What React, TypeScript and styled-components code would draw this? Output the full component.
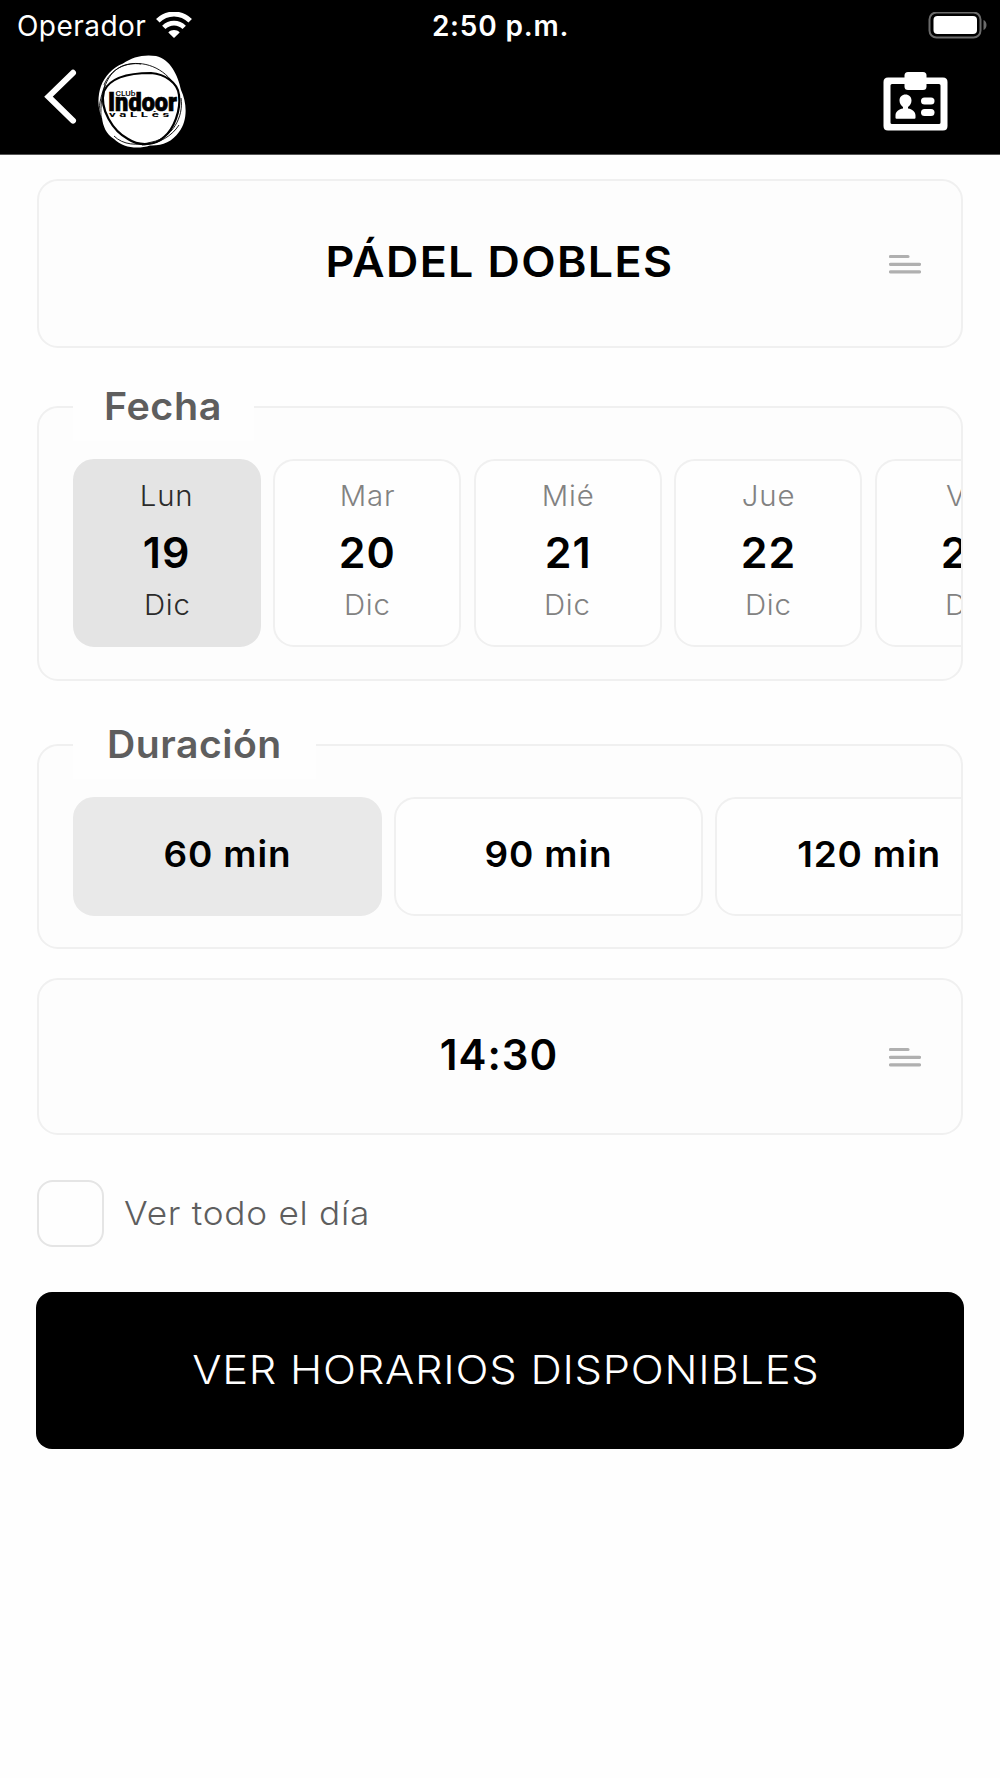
import React, { useState } from "react";
import styled, { createGlobalStyle } from "styled-components";

const Global = createGlobalStyle`
  *, *::before, *::after { box-sizing: border-box; }
  body { margin: 0; background: #fefefe; font-family: Inter, "Liberation Sans", sans-serif; }
  button { font: inherit; color: inherit; padding: 0; margin: 0; }
`;

const Screen = styled.div`
  width: 1000px;
  height: 1778px;
  overflow: hidden;
  display: flex;
  flex-direction: column;
  background: #fefefe;
  color: #000;
`;

const Top = styled.header`
  height: 155px;
  flex: none;
  background: #000;
  color: #fff;
  border-bottom: 1px solid #555;
`;

const StatusBar = styled.div`
  height: 51px;
  display: grid;
  grid-template-columns: 1fr auto 1fr;
  align-items: center;
  padding: 0 13px 0 17px;
`;

const Carrier = styled.div`
  display: flex;
  align-items: center;
  gap: 10px;
  font-size: 28px;
  line-height: 50px;
  letter-spacing: 0.45px;
`;

const Clock = styled.div`
  padding-right: 3px;
  font-size: 28px;
  font-weight: 560;
  line-height: 50px;
  letter-spacing: 0.8px;
`;

const BatterySlot = styled.div`
  display: flex;
  justify-content: flex-end;
`;

const NavBar = styled.nav`
  height: 103px;
  display: flex;
  align-items: flex-start;
  padding: 0 52px 0 44px;
`;

const IconButton = styled.button<{ $drop: number }>`
  display: flex;
  margin-top: ${(p) => p.$drop}px;
  border: 0;
  background: none;
`;

const LogoSlot = styled.div`
  display: flex;
  margin: 4px auto 0 20px;
`;

const Content = styled.main`
  display: flex;
  flex-direction: column;
  padding: 24px 37px 0;
`;

const Wide = styled.span<{ $scale: number; $origin?: string }>`
  display: inline-block;
  transform: scaleX(${(p) => p.$scale});
  transform-origin: ${(p) => p.$origin ?? "center"};
`;

const Selector = styled.button<{ $height: number }>`
  height: ${(p) => p.$height}px;
  display: grid;
  grid-template-columns: 32px 1fr 32px;
  align-items: center;
  padding: 1px 40px 0 38px;
  border: 2px solid #f0f0f0;
  border-radius: 21px;
  background: #fdfdfd;
`;

const TimeSelector = styled(Selector)`
  margin-top: 29px;
`;

const SelectorText = styled.span<{ $spacing: number }>`
  grid-column: 2;
  padding-bottom: 5px;
  text-align: center;
  font-size: 42px;
  font-weight: 560;
  line-height: 52px;
  letter-spacing: ${(p) => p.$spacing}px;
`;

const Group = styled.section<{ $height: number; $top: number }>`
  height: ${(p) => p.$height}px;
  margin-top: ${(p) => p.$top}px;
  border: 2px solid #f0f0f0;
  border-radius: 21px;
  background: #fdfdfd;
`;

const GroupTitle = styled.h2<{ $width: number; $indent: number }>`
  width: ${(p) => p.$width}px;
  height: 70px;
  margin: -37px 0 0 34px;
  padding-left: ${(p) => p.$indent}px;
  background: #fefefe;
  color: #5e5e5e;
  font-size: 38px;
  font-weight: 560;
  line-height: 71px;
  letter-spacing: 0.5px;
`;

const Scroller = styled.div<{ $gap: number }>`
  display: flex;
  gap: ${(p) => p.$gap}px;
  margin-top: 18px;
  padding-left: 34px;
  overflow: hidden;
`;

const DayCard = styled.button<{ $active: boolean }>`
  width: 188px;
  height: 188px;
  flex: none;
  display: grid;
  grid-template-rows: 36px 77px 28px;
  align-content: start;
  align-items: center;
  justify-items: center;
  padding-top: 17px;
  border: 2px solid ${(p) => (p.$active ? "#e4e4e4" : "#f0f0f0")};
  border-radius: 21px;
  background: ${(p) => (p.$active ? "#e4e4e4" : "#fefefe")};
  color: ${(p) => (p.$active ? "#2b2b2b" : "#828282")};
`;

const DayLabel = styled.span`
  font-size: 28px;
  font-weight: 350;
  line-height: 28px;
  letter-spacing: 0.8px;
  transform: scaleX(1.05);
`;

const DayNumber = styled.span`
  color: #000;
  font-size: 42.5px;
  font-weight: 580;
  line-height: 50px;
  letter-spacing: 1px;
  transform: scaleX(1.01);
`;

const Pill = styled.button<{ $active: boolean }>`
  width: 308.5px;
  height: 119px;
  flex: none;
  padding-bottom: 4px;
  border: 2px solid ${(p) => (p.$active ? "#e9e9e9" : "#f0f0f0")};
  border-radius: 21px;
  background: ${(p) => (p.$active ? "#e9e9e9" : "#fefefe")};
  font-size: 35.5px;
  font-weight: 560;
  letter-spacing: 0.8px;
`;

const CheckRow = styled.label`
  display: flex;
  align-items: center;
  gap: 20px;
  margin-top: 45px;
  color: #5e5e5e;
  font-size: 33px;
  font-weight: 350;
  line-height: 67px;
  letter-spacing: 0.7px;
`;

const Checkbox = styled.input`
  appearance: none;
  width: 67px;
  height: 67px;
  flex: none;
  margin: 0;
  border: 2px solid #e5e5e5;
  border-radius: 16px;
  background: #fefefe;
`;

const Submit = styled.button`
  height: 157px;
  margin: 45px -1px 0;
  padding: 0 0 3px 11px;
  border: 0;
  border-radius: 16px;
  background: #000;
  color: #fff;
  font-size: 40px;
  font-weight: 340;
  letter-spacing: 0.7px;
`;

const WifiIcon = () => (
  <svg width="36" height="28" viewBox="0 0 36 28" fill="none" stroke="#fff" strokeWidth="5">
    <path d="M1.8 8.8C10.8 -0.2 25.2 -0.2 34.2 8.8" />
    <path d="M7.8 15.4C13.5 9.8 22.5 9.8 28.2 15.4" strokeWidth="4.8" />
    <path d="M12.3 20.4C15.5 17.2 20.5 17.2 23.7 20.4L18 26Z" fill="#fff" stroke="none" />
  </svg>
);

const BatteryIcon = () => (
  <svg width="59" height="28" viewBox="0 0 59 28" fill="none">
    <rect x="1.5" y="0.5" width="51" height="25" rx="7" stroke="#6b6b6b" strokeWidth="2" />
    <rect x="5.500" y="4" width="43.500" height="18" rx="4" fill="#fff" />
    <path d="M55.500 8C59.500 9.500 59.500 16.500 55.500 18Z" fill="#6b6b6b" />
  </svg>
);

const BackIcon = () => (
  <svg width="34" height="58" viewBox="0 0 34 58" fill="none">
    <path
      d="M29 4.800L4.500 28.700L29 52.600"
      stroke="#fff"
      strokeWidth="6"
      strokeLinecap="round"
      strokeLinejoin="miter"
    />
  </svg>
);

const BadgeIcon = () => (
  <svg width="65" height="60" viewBox="0 0 65 60" fill="#fff">
    <path
      fillRule="evenodd"
      d="M5 5.500H60Q64.500 5.500 64.500 10V54Q64.500 58.500 60 58.500H5Q.5 58.500 .5 54V10Q.5 5.500 5 5.500ZM9 12Q7.500 12 7.500 13.500V50.500Q7.500 52 9 52H56Q57.500 52 57.500 50.500V13.500Q57.500 12 56 12Z"
    />
    <rect x="21.500" y="0" width="22" height="18" rx="3.500" />
    <path d="M22.500 22.500C26 22.500 28.500 25 28.500 28.500C28.500 31.500 27 33.500 25 35V36.500C29 37 32.500 39.500 32.500 43.500V45.800Q32.500 46.800 31.500 46.800H13.500Q12.500 46.800 12.500 45.800V43.500C12.500 39.500 16 37 20 36.500V35C18 33.500 16.500 31.500 16.500 28.500C16.500 25 19 22.500 22.500 22.500Z" />
    <rect x="38" y="25.500" width="13.500" height="7" rx="3.500" />
    <rect x="38" y="37" width="13.500" height="7" rx="3.500" />
  </svg>
);

const LinesIcon = () => (
  <svg width="32" height="20" viewBox="0 0 32 20" stroke="#b0b0b0" strokeWidth="3.200" strokeLinecap="round">
    <path d="M1.500 2.500H19M1.500 10.300H30.500M1.500 17.900H30.500" />
  </svg>
);

const LogoText = styled.text<{ $weight: number }>`
  font-family: "Roboto", "Liberation Sans", sans-serif;
  font-weight: ${(p) => p.$weight};
  fill: #000;
`;

const ClubLogo = () => (
  <svg width="88" height="94" viewBox="0 0 88 94" fill="none">
    <path
      fill="#fff"
      d="M25 8.500C34 2 46-1 58 1C72 4 80 20 83 35C89 48 90 65 81 77C74 87 64 91 52 90.500C40 94.500 25 93 16 84C8 79 5 71 4 63C0 56-1 42 3 31C7 21 14 13 25 8.500Z"
    />
    <g stroke="#000">
      <path
        strokeWidth="2.200"
        d="M6 36C13 21 35 18 53 18C67 19 80 28 81 40C83 55 76 74 66 82C58 90 42 92 30 84C15 76 1 54 6 36Z"
      />
      <path strokeWidth="0.900" d="M3 62C2 39 8 16 27 10C45 5 66 12 78 32" />
      <path strokeWidth="0.900" d="M6 30C13 13 29 7 43 9" />
      <path strokeWidth="0.900" d="M83 43C86 62 74 83 54 87C39 91 25 90 16 81" />
      <path strokeWidth="0.900" d="M81 70C74 81 61 89 44 90" />
      <path strokeWidth="0.900" d="M1 58C1 48 4 38 7 30" />
    </g>
    <LogoText $weight={900} x="10" y="55.500" fontSize="25" textLength="69" lengthAdjust="spacingAndGlyphs" stroke="#000" strokeWidth="0.700">
      Indoor
    </LogoText>
    <rect x="16.800" y="35" width="20.500" height="6.400" fill="#fff" />
    <LogoText $weight={500} x="17.500" y="41" fontSize="6.500" textLength="20" lengthAdjust="spacingAndGlyphs">
      CLUb
    </LogoText>
    <LogoText $weight={700} x="11" y="62" fontSize="7" letterSpacing="2" textLength="64" lengthAdjust="spacingAndGlyphs">
      vaLLès
    </LogoText>
  </svg>
);

const days = [
  { name: "Lun", day: 19 },
  { name: "Mar", day: 20 },
  { name: "Mié", day: 21 },
  { name: "Jue", day: 22 },
  { name: "Vie", day: 23 },
];

const durations = [60, 90, 120];

export default function App() {
  const [day, setDay] = useState(19);
  const [duration, setDuration] = useState(60);

  return (
    <Screen>
      <Global />
      <Top>
        <StatusBar>
          <Carrier>
            Operador
            <WifiIcon />
          </Carrier>
          <Clock>2:50 p.m.</Clock>
          <BatterySlot>
            <BatteryIcon />
          </BatterySlot>
        </StatusBar>
        <NavBar>
          <IconButton $drop={17}>
            <BackIcon />
          </IconButton>
          <LogoSlot>
            <ClubLogo />
          </LogoSlot>
          <IconButton $drop={21}>
            <BadgeIcon />
          </IconButton>
        </NavBar>
      </Top>
      <Content>
        <Selector $height={169}>
          <SelectorText $spacing={1.3}>
            <Wide $scale={1.065}>PÁDEL DOBLES</Wide>
          </SelectorText>
          <LinesIcon />
        </Selector>

        <Group $height={275} $top={58}>
          <GroupTitle $width={181} $indent={31}>
            <Wide $scale={1.04} $origin="left">Fecha</Wide>
          </GroupTitle>
          <Scroller $gap={12.4}>
            {days.map((d) => (
              <DayCard key={d.day} $active={d.day === day} onClick={() => setDay(d.day)}>
                <DayLabel>{d.name}</DayLabel>
                <DayNumber>{d.day}</DayNumber>
                <DayLabel>Dic</DayLabel>
              </DayCard>
            ))}
          </Scroller>
        </Group>

        <Group $height={205} $top={63}>
          <GroupTitle $width={243} $indent={34}>
            <Wide $scale={1.03} $origin="left">Duración</Wide>
          </GroupTitle>
          <Scroller $gap={12.5}>
            {durations.map((m) => (
              <Pill key={m} $active={m === duration} onClick={() => setDuration(m)}>
                <Wide $scale={1.04}>{m} min</Wide>
              </Pill>
            ))}
          </Scroller>
        </Group>

        <TimeSelector $height={157}>
          <SelectorText $spacing={1}>
            <Wide $scale={1} style={undefined}>14:30</Wide>
          </SelectorText>
          <LinesIcon />
        </TimeSelector>

        <CheckRow>
          <Checkbox type="checkbox" />
          <Wide $scale={1.065} $origin="left">Ver todo el día</Wide>
        </CheckRow>

        <Submit>
          <Wide $scale={1.086}>VER HORARIOS DISPONIBLES</Wide>
        </Submit>
      </Content>
    </Screen>
  );
}
